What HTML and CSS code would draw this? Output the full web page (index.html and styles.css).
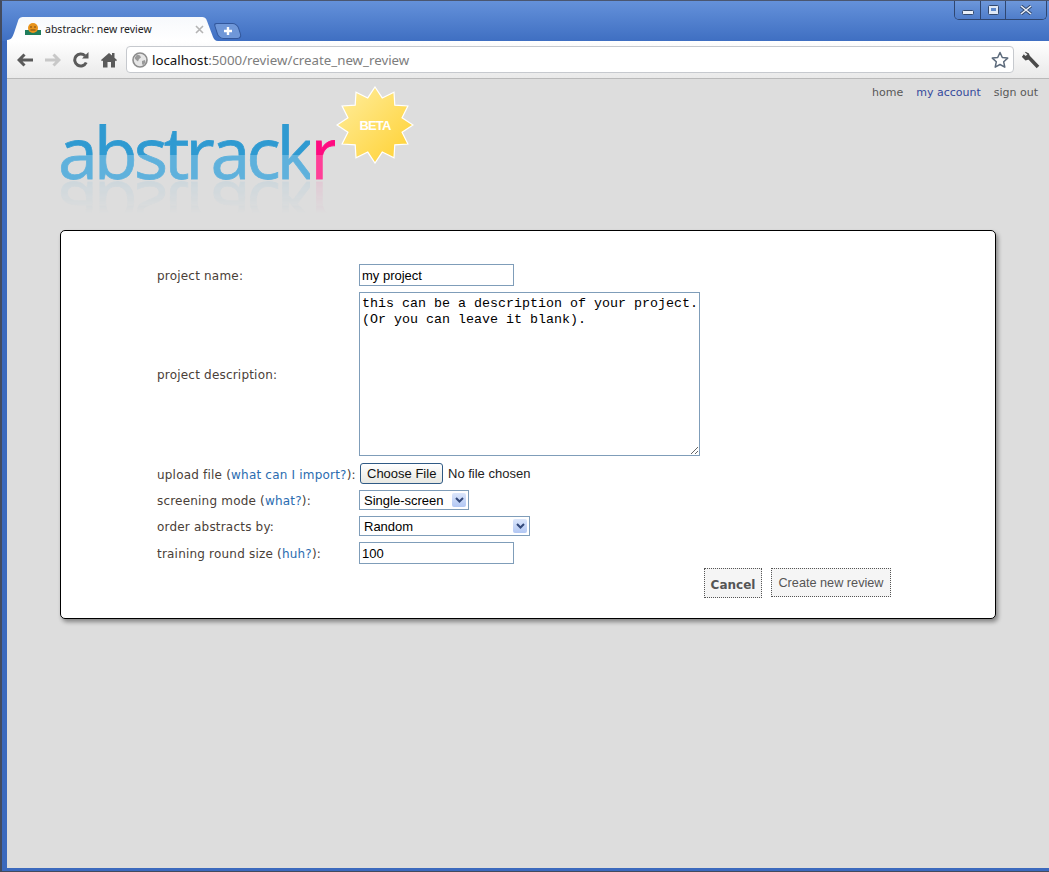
FILE: index.html
```html
<!DOCTYPE html>
<html lang="en">
<head>
  <meta charset="UTF-8" />
  <title>abstrackr: new review</title>
  <link rel="stylesheet" href="styles.css">
</head>
<body>
  <div class="window">
    <div class="tabstrip">
      <div class="tab">
        <svg class="favicon" width="16" height="12" viewBox="0 0 16 12">
          <path d="M0 7h16v5H0z" fill="#1f7d5c"/>
          <circle cx="8" cy="5" r="5" fill="#e8931c"/>
          <path d="M5 4h2M9 4h2M5.500 7h5" stroke="#7a4a10" fill="none"/>
        </svg>
        <span class="tab-title">abstrackr: new review</span>
        <svg class="tab-close" width="9" height="9" viewBox="0 0 9 9"><path d="M1 1l7 7M8 1L1 8" stroke="#b4b4b4" stroke-width="1.600"/></svg>
      </div>
      <div class="new-tab">
        <svg width="10" height="10" viewBox="0 0 10 10"><path d="M5 1v8M1 5h8" stroke="#fff" stroke-width="2.400"/></svg>
      </div>
      <div class="window-buttons">
        <div class="win-btn win-min"><svg width="12" height="6" viewBox="0 0 12 6"><rect x=".5" y=".5" width="11" height="4" rx="1" fill="#e8eef8" stroke="#33496f"/></svg></div>
        <div class="win-btn win-max"><svg width="11" height="10" viewBox="0 0 11 10"><rect x=".5" y=".5" width="10" height="9" rx="1" fill="#dfe8f6" stroke="#33496f"/><rect x="3" y="3" width="5" height="3" fill="#5d88cc"/></svg></div>
        <div class="win-btn win-close"><svg width="14" height="10" viewBox="0 0 14 10"><path d="M2 1l10 8M12 1L2 9" stroke="#33496f" stroke-width="3.400"/><path d="M2 1l10 8M12 1L2 9" stroke="#e8eef8" stroke-width="1.600"/></svg></div>
      </div>
    </div>

    <div class="toolbar">
      <svg class="tool" width="16" height="14" viewBox="0 0 16 14"><path d="M7.500 1.500L2 7l5.500 5.500M2.500 7H16" fill="none" stroke="#5a5a5a" stroke-width="3"/></svg>
      <svg class="tool" width="16" height="14" viewBox="0 0 16 14"><path d="M8.500 1.500L14 7l-5.500 5.500M13.500 7H0" fill="none" stroke="#c8c8c8" stroke-width="3"/></svg>
      <svg class="tool" width="16" height="16" viewBox="0 0 16 16"><path d="M13.200 10.500A6 6 0 1 1 12 3.800" fill="none" stroke="#5a5a5a" stroke-width="3"/><path d="M9 6.500h6.500V0z" fill="#5a5a5a"/></svg>
      <svg class="tool" width="16" height="16" viewBox="0 0 16 16"><path d="M0 8l8-7 3 2.600V1h2.500v4.800L16 8l-1 1.200-1-.8V15.500H10V10H6.500v5.500H2V8.400l-1 .8z" fill="#5a5a5a"/></svg>
      <div class="omnibox">
        <svg class="globe" width="16" height="16" viewBox="0 0 16 16">
          <circle cx="8" cy="8" r="7" fill="#e6e6e6" stroke="#8c8c8c" stroke-width="1.600"/>
          <path d="M5 2.500l3 1 1 2-2 1.500-1 2.500-2-1.500-1.500-2zM10 9l3-1 .5 2.500L11 13.500l-1-2z" fill="#9a9a9a"/>
        </svg>
        <span class="url"><span class="url-host">localhost</span>:5000/review/create_new_review</span>
        <svg class="bookmark" width="18" height="18" viewBox="0 0 18 18"><path d="M9 1.500l2.300 5 5.400.6-4 3.700 1.100 5.400L9 13.500l-4.800 2.700 1.100-5.400-4-3.700 5.400-.6z" fill="#fff" stroke="#5d6b7c" stroke-width="1.500" stroke-linejoin="round"/></svg>
      </div>
      <svg class="wrench" width="18" height="18" viewBox="0 0 18 18"><path d="M1 4.500L4 7.500 7 6.500 16 16" fill="none" stroke="#4a4a4a" stroke-width="3.600"/><path d="M3.500.8L1 4.500l2.500 3.200L8 6.200 7 2.500z" fill="#4a4a4a"/><path d="M2 .5l3.500 3L3.500 5 .5 2z" fill="#f0f0f0"/></svg>
    </div>

    <div class="page">
      <header class="header">
        <div class="logo">
          <div class="logo-text"><span class="logo-blue">abstrack</span><span class="logo-pink">r</span></div>
          <svg class="beta" width="78" height="78" viewBox="0 0 78 78">
            <defs>
              <linearGradient id="starfill" x1="0" y1="0" x2="1" y2="1">
                <stop offset="0" stop-color="#ffeea0"/>
                <stop offset="1" stop-color="#ffd02e"/>
              </linearGradient>
            </defs>
            <polygon points="39,1 46.250,11.950 58,6.100 58.800,19.200 71.900,20 66.050,31.750 77,39 66.050,46.250 71.900,58 58.800,58.800 58,71.900 46.250,66.050 39,77 31.750,66.050 20,71.900 19.200,58.800 6.100,58 11.950,46.250 1,39 11.950,31.750 6.100,20 19.200,19.200 20,6.100 31.750,11.950" fill="url(#starfill)" stroke="#fff" stroke-width="1.200"/>
            <text x="39" y="44" text-anchor="middle" class="beta-text">BETA</text>
          </svg>
        </div>
        <nav class="topnav">
          <a href="#">home</a>
          <a href="#" class="current">my account</a>
          <a href="#">sign out</a>
        </nav>
      </header>

      <main class="card">
        <form class="review-form">
          <label for="name">project name:</label>
          <div><input type="text" id="name" class="text-input" value="my project" /></div>

          <label for="description">project description:</label>
          <div><textarea id="description" class="description">this can be a description of your project.
(Or you can leave it blank).</textarea></div>

          <label for="upload" class="row-file">upload file (<a href="#">what can I import?</a>):</label>
          <div class="row-file"><input type="file" id="upload" class="file-input" /></div>

          <label for="mode">screening mode (<a href="#">what?</a>):</label>
          <div class="select-wrap select-short">
            <select id="mode"><option>Single-screen</option></select>
            <span class="select-arrow"><svg width="9" height="6" viewBox="0 0 9 6"><path d="M1 1l3.500 3.500L8 1" fill="none" stroke="#33497a" stroke-width="2"/></svg></span>
          </div>

          <label for="order">order abstracts by:</label>
          <div class="select-wrap select-long">
            <select id="order"><option>Random</option></select>
            <span class="select-arrow"><svg width="9" height="6" viewBox="0 0 9 6"><path d="M1 1l3.500 3.500L8 1" fill="none" stroke="#33497a" stroke-width="2"/></svg></span>
          </div>

          <label for="size">training round size (<a href="#">huh?</a>):</label>
          <div><input type="text" id="size" class="text-input" value="100" /></div>
        </form>
        <div class="actions">
          <a href="#" class="btn btn-cancel">Cancel</a>
          <button type="button" class="btn btn-create">Create new review</button>
        </div>
      </main>
    </div>
  </div>
</body>
</html>
```

FILE: styles.css
```css
* {
  box-sizing: border-box;
}

html, body {
  margin: 0;
  height: 100%;
  overflow: hidden;
}

body {
  font-family: "DejaVu Sans", sans-serif;
  background-color: #dddddd;
}

.window {
  height: 872px;
  display: flex;
  flex-direction: column;
  background-color: #3b69bd;
  border-top: 1px solid #4a5670;
  border-left: 2px solid #434b5e;
  border-bottom: 1px solid #434b5e;
  padding: 0 0 3px 4px;
}

/* tabs */
.tabstrip {
  height: 40px;
  flex: none;
  display: flex;
  align-items: flex-end;
  margin-left: -4px;
  padding-left: 5px;
  background: linear-gradient(to bottom, #6491da, #3f6fc2);
}

.tab {
  width: 211px;
  height: 24px;
  flex: none;
  display: flex;
  align-items: center;
  padding: 0 14px 0 18px;
  background: linear-gradient(to bottom, #f7f9fc, #fff);
  clip-path: path("M0 23 C5 23 6 19 8 13 L11 4 C12 1 13 0 17 0 L194 0 C198 0 199 1 200 4 L206 20 C207 22 208 24 211 24 L0 24 Z");
}

.favicon {
  flex: none;
}

.tab-title {
  margin-left: 4px;
  flex: 1;
  font: 10.500px "Noto Sans", sans-serif;
  color: #222;
}

.new-tab {
  width: 24px;
  height: 16px;
  margin: 0 0 2px -2px;
  display: flex;
  align-items: center;
  justify-content: center;
  background-color: #6f97d8;
  border: 1px solid #33589c;
  border-radius: 3px 5px 5px 5px;
  transform: skewX(18deg);
}

.new-tab svg {
  transform: skewX(-18deg);
}

.window-buttons {
  margin-left: auto;
  margin-right: 2px;
  align-self: flex-start;
  display: flex;
  height: 19px;
  border: 1px solid #2f4670;
  border-top: none;
  border-radius: 0 0 5px 5px;
  overflow: hidden;
}

.win-btn {
  display: flex;
  align-items: center;
  justify-content: center;
  border-left: 1px solid #2f4670;
  background: linear-gradient(to bottom, #6d97da, #4f7dca);
}

.win-min {
  width: 25px;
  border-left: none;
  padding-top: 6px;
}

.win-max {
  width: 25px;
}

.win-close {
  width: 41px;
}

/* toolbar */
.toolbar {
  height: 38px;
  flex: none;
  display: flex;
  align-items: center;
  gap: 12px;
  margin-left: 1px;
  padding: 0 9px 0 10px;
  background: linear-gradient(to bottom, #ffffff, #e9e9e9);
  border-bottom: 1px solid #b9b9b9;
}

.tool {
  flex: none;
}

.omnibox {
  flex: 1;
  height: 27px;
  display: flex;
  align-items: center;
  margin: 0 -4px 0 -3px;
  padding: 0 4px 0 5px;
  background-color: #fff;
  border: 1px solid #c6c9ce;
  border-radius: 4px;
}

.url {
  margin-left: 4px;
  flex: 1;
  font: 13.300px "Noto Sans", sans-serif;
  color: #7d7d7d;
}

.url-host {
  color: #111;
}

.wrench {
  flex: none;
}

/* page */
.page {
  flex: 1;
  margin-left: 1px;
  background-color: #dddddd;
}

.header {
  height: 151px;
  display: flex;
  justify-content: space-between;
}

.logo {
  position: relative;
  padding: 37px 0 0 51px;
}

.logo-text {
  height: 70px;
  font: 72px/70px "Open Sans", sans-serif;
  letter-spacing: -4.200px;
  -webkit-text-stroke: 0.8px transparent;
  -webkit-box-reflect: below -11px linear-gradient(transparent 45%, rgba(255, 255, 255, 0.14));
}

.logo-blue {
  background: linear-gradient(to bottom, #2f9ad1 0 53px, #5fb1dc 53px);
  -webkit-background-clip: text;
  background-clip: text;
  color: transparent;
}

.logo-pink {
  background: linear-gradient(to bottom, #ff0a80 0 53px, #ff3f98 53px);
  -webkit-background-clip: text;
  background-clip: text;
  color: transparent;
}

.beta {
  position: absolute;
  left: 329px;
  top: 7px;
}

.beta-text {
  font: bold 13px "Liberation Sans", sans-serif;
  letter-spacing: -0.800px;
  fill: #fff;
}

.topnav {
  display: flex;
  gap: 13px;
  padding: 7px 11px 0 0;
  font-size: 11px;
  line-height: 14px;
}

.topnav a {
  color: #585858;
  text-decoration: none;
}

.topnav a.current {
  color: #34499c;
}

.card {
  width: 936px;
  margin-left: 53px;
  padding: 33px 104px 20px 96px;
  background-color: #fff;
  border: 1px solid #000;
  border-radius: 5px;
  box-shadow: 2px 3px 4px rgba(0, 0, 0, 0.4);
}

.review-form {
  display: grid;
  grid-template-columns: 202px 1fr;
  row-gap: 6px;
  align-items: center;
}

.review-form label {
  padding-top: 2px;
  font-size: 12px;
  letter-spacing: 0.200px;
  white-space: nowrap;
  color: #4a4038;
}

.review-form a {
  color: #2a6cb0;
  text-decoration: none;
}

.review-form > div {
  display: flex;
}

.text-input,
.description,
.select-wrap select {
  border: 1px solid #7f9db9;
  background-color: #fff;
  color: #000;
  margin: 0;
  border-radius: 0;
  outline: none;
}

.text-input {
  width: 155px;
  height: 22px;
  padding: 1px 2px;
  font: 13px "Liberation Sans", sans-serif;
}

.description {
  width: 341px;
  height: 164px;
  padding: 3px 0 3px 2px;
  font: 13.330px/16px "Liberation Mono", monospace;
}

.review-form .row-file {
  margin-top: 1px;
}

.file-input {
  height: 21px;
  margin-left: 1px;
  font: 13px "Liberation Sans", sans-serif;
  color: #222;
}

.file-input::file-selector-button {
  width: 83px;
  height: 21px;
  margin-right: 5px;
  font: 13px "Liberation Sans", sans-serif;
  color: #111;
  background: linear-gradient(to bottom, #ffffff, #e8e8e2);
  border: 1px solid #2f5a85;
  border-radius: 3px;
}

.select-wrap {
  position: relative;
}

.select-wrap select {
  appearance: none;
  width: 100%;
  height: 20px;
  padding: 0 0 0 4px;
  font: 13px "Liberation Sans", sans-serif;
}

.select-short {
  width: 110px;
}

.select-long {
  width: 171px;
}

.select-arrow {
  position: absolute;
  right: 3px;
  top: 3px;
  width: 14px;
  height: 14px;
  display: flex;
  align-items: center;
  justify-content: center;
  background: linear-gradient(to bottom, #dbe6fb, #b2c7f3);
  border-radius: 2px;
  pointer-events: none;
}

.actions {
  display: flex;
  justify-content: flex-end;
  align-items: flex-start;
  gap: 9px;
  margin-top: 4px;
}

.btn {
  display: block;
  background-color: #f5f5f5;
  border: 1px dotted #555;
  color: #555;
  text-decoration: none;
}

.btn-cancel {
  width: 58px;
  height: 30px;
  padding-top: 9px;
  text-align: center;
  font-size: 12px;
  font-weight: bold;
}

.btn-create {
  width: 120px;
  height: 29px;
  padding: 0;
  font: 12.700px "Liberation Sans", sans-serif;
}
```
